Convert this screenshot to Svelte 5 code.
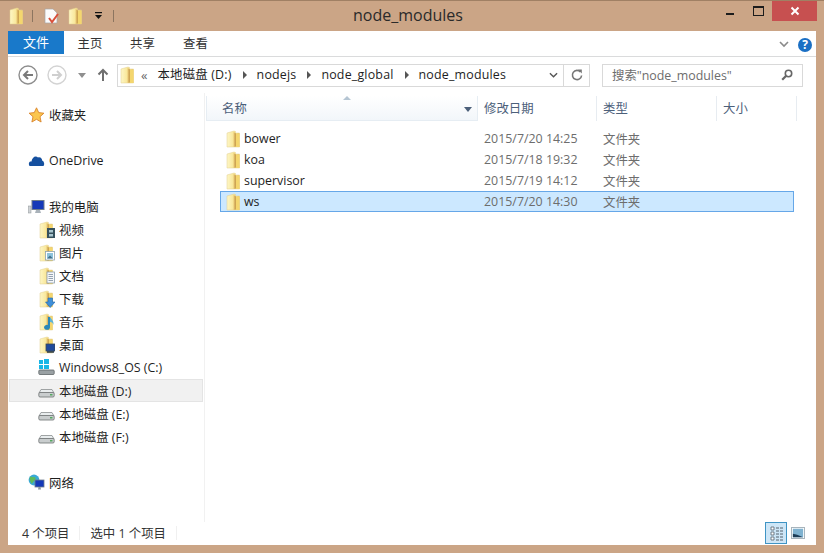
<script>
  const files = [
    { name: 'bower', date: '2015/7/20 14:25' },
    { name: 'koa', date: '2015/7/18 19:32' },
    { name: 'supervisor', date: '2015/7/19 14:12' },
    { name: 'ws', date: '2015/7/20 14:30', selected: true }
  ];
  const libs = [
    { name: '视频', o: 'video' },
    { name: '图片', o: 'pic' },
    { name: '文档', o: 'doc' },
    { name: '下载', o: 'down' },
    { name: '音乐', o: 'music' },
    { name: '桌面', o: 'desk' }
  ];
  const crumbs = ['本地磁盘 (D:)', 'nodejs', 'node_global', 'node_modules'];
  const disks = [
    { name: '本地磁盘 (D:)', selected: true },
    { name: '本地磁盘 (E:)' },
    { name: '本地磁盘 (F:)' }
  ];
</script>

{#snippet folder(overlay = '')}
  <svg class="ic16" viewBox="0 0 17 18" width="17" height="18">
    <defs>
      <linearGradient id="fg" x1="0" x2="1" y1="0" y2="0">
        <stop offset="0" stop-color="#fdf6c6" />
        <stop offset="0.6" stop-color="#f8e48f" />
        <stop offset="1" stop-color="#eecb62" />
      </linearGradient>
      <linearGradient id="fs" x1="0" x2="1" y1="0" y2="0">
        <stop offset="0" stop-color="#e9c878" />
        <stop offset="1" stop-color="#c79c4a" />
      </linearGradient>
    </defs>
    <path d="M2 3 L9 1 L10.5 1.5 L10.5 3 L14.5 3 L14.5 17 L2 17 Z" fill="url(#fg)" stroke="#e3cf8e" stroke-width="0.5" />
    <path d="M8.5 2 L11 3.5 L11 16.5 L8.5 17 Z" fill="url(#fs)" />
    <path d="M11 4 L14.5 4 L14.5 17 L11 17 Z" fill="#f4d66e" />
    {#if overlay === 'video'}
      <rect x="9" y="7" width="8" height="10" fill="#35505c" />
      <rect x="11" y="9" width="4" height="2.5" fill="#a9c6cf" />
      <rect x="11" y="13" width="4" height="2.5" fill="#a9c6cf" />
    {:else if overlay === 'pic'}
      <rect x="7.5" y="7.5" width="9" height="8.5" fill="#fff" stroke="#8da3ad" stroke-width="0.8" />
      <rect x="9" y="9" width="6" height="5.5" fill="#8cc3dc" />
      <path d="M9 14.5 L12 11.5 L15 14.5 Z" fill="#42708a" />
    {:else if overlay === 'doc'}
      <rect x="9" y="5" width="7.5" height="11" fill="#f5f7fa" stroke="#8b9cab" stroke-width="0.8" />
      <path d="M10.5 7.5h4.5M10.5 9.5h4.5M10.5 11.5h4.5M10.5 13.5h4.5" stroke="#7c8da0" stroke-width="0.8" />
    {:else if overlay === 'down'}
      <path d="M10 8 H14.5 V12 H17 L12.2 17.5 L7.5 12 H10 Z" fill="#3f8fd8" stroke="#1f66ad" stroke-width="0.6" />
    {:else if overlay === 'music'}
      <path d="M12 4 L12 14 A3 2.5 0 1 1 10 12 L10 4 Z" fill="#2b88b8" />
      <path d="M12 4 C14 7 16 8 15.5 12 C15 10 14 9 12 9 Z" fill="#5fb4d8" />
    {:else if overlay === 'desk'}
      <rect x="8" y="8" width="9" height="7" fill="#1f4a9c" stroke="#3b4a55" stroke-width="0.8" />
      <rect x="9" y="15" width="7" height="1.8" fill="#3b4a55" />
    {/if}
  </svg>
{/snippet}

{#snippet disk()}
  <svg class="ic16" viewBox="0 0 17 18" width="17" height="18">
    <path d="M3 7.5 H14 L16 11 H1 Z" fill="#e9edee" stroke="#8a8f90" stroke-width="0.8" />
    <rect x="0.8" y="10.5" width="15.4" height="4.5" rx="1.2" fill="#c9cdce" stroke="#6d7172" stroke-width="0.8" />
    <rect x="12" y="12" width="2.5" height="1.5" fill="#55a860" />
  </svg>
{/snippet}

<div class="window">
  <header class="titlebar">
    <div class="qat">
      {@render folder()}
      <i class="qsep"></i>
      <svg viewBox="0 0 16 16" width="16" height="16" class="qdoc">
        <path d="M2 1 H10 L14 5 V15 H2 Z" fill="#fbfbfb" stroke="#a8a8a8" stroke-width="0.7" />
        <path d="M6 10 L9 14 L15 6" fill="none" stroke="#d9503a" stroke-width="2" />
      </svg>
      {@render folder()}
      <svg viewBox="0 0 9 9" width="9" height="9" class="qdrop">
        <rect x="1" y="1" width="7" height="1.2" fill="#111" />
        <path d="M1 4 H8 L4.5 8 Z" fill="#111" />
      </svg>
      <i class="qsep last"></i>
    </div>
    <div class="title">node_modules</div>
    <div class="winbtns">
      <span class="wb"><i class="min"></i></span>
      <span class="wb"><i class="max"></i></span>
      <span class="wb close">
        <svg viewBox="0 0 10 10" width="10" height="10"><path d="M1.5 1.5 L8.5 8.5 M8.5 1.5 L1.5 8.5" stroke="#fff" stroke-width="2" /></svg>
      </span>
    </div>
  </header>

  <div class="content">
    <nav class="tabs">
      <span class="tab file">文件</span>
      <span class="tab">主页</span>
      <span class="tab">共享</span>
      <span class="tab">查看</span>
      <span class="tabs-right">
        <svg viewBox="0 0 10 7" width="10" height="7"><path d="M1 1 L5 5 L9 1" fill="none" stroke="#8a8a8a" stroke-width="1.6" /></svg>
        <span class="help">?</span>
      </span>
    </nav>

    <div class="navbar">
      <svg class="back" viewBox="0 0 20 20" width="20" height="20">
        <circle cx="10" cy="10" r="9" fill="#fff" stroke="#8e8e8e" stroke-width="1.4" />
        <path d="M15 10 H6 M10 6 L6 10 L10 14" fill="none" stroke="#7a7a7a" stroke-width="2" />
      </svg>
      <svg class="fwd" viewBox="0 0 20 20" width="20" height="20">
        <circle cx="10" cy="10" r="9" fill="#fff" stroke="#d3d3d3" stroke-width="1.4" />
        <path d="M5 10 H14 M10 6 L14 10 L10 14" fill="none" stroke="#cfcfcf" stroke-width="2" />
      </svg>
      <svg class="hist" viewBox="0 0 8 5" width="8" height="5"><path d="M0 0 H8 L4 5 Z" fill="#8f8f8f" /></svg>
      <svg class="up" viewBox="0 0 12 14" width="12" height="14">
        <path d="M6 13 V2 M1.5 6.5 L6 2 L10.5 6.5" fill="none" stroke="#6f6f6f" stroke-width="2" />
      </svg>
      <div class="address">
        {@render folder()}
        <span class="chev">«</span>
        {#each crumbs as c, i}
          <span class="crumb">{c}</span>
          {#if i < crumbs.length - 1}<i class="tri"></i>{/if}
        {/each}
        <span class="addr-end">
          <svg viewBox="0 0 10 7" width="9" height="7"><path d="M1 1 L5 5 L9 1" fill="none" stroke="#555" stroke-width="1.5" /></svg>
        </span>
        <span class="refresh">
          <svg viewBox="0 0 12 12" width="12" height="12"><path d="M9.5 3 A4.6 4.6 0 1 0 10.6 6.5" fill="none" stroke="#777" stroke-width="1.6" /><path d="M7 0.5 L10.8 0.5 L10.8 4.5 Z" fill="#777" /></svg>
        </span>
      </div>
      <div class="search">
        <span>搜索"node_modules"</span>
        <svg viewBox="0 0 12 12" width="12" height="12"><circle cx="7.5" cy="4.5" r="3.2" fill="none" stroke="#666" stroke-width="1.6" /><path d="M5 7 L1.2 10.8" stroke="#666" stroke-width="2.2" /></svg>
      </div>
    </div>

    <div class="main">
      <aside class="sidebar">
        <div class="group">
          <div class="item">
            <svg class="ic16" viewBox="0 0 16 16" width="16" height="16"><path d="M8 0.8 L10.2 5.6 L15.4 6.2 L11.5 9.7 L12.6 15 L8 12.3 L3.4 15 L4.5 9.7 L0.6 6.2 L5.8 5.6 Z" fill="#fbc64e" stroke="#d9832a" stroke-width="0.9" /></svg>
            收藏夹
          </div>
        </div>
        <div class="group">
          <div class="item">
            <svg class="ic16" viewBox="0 0 16 16" width="16" height="16"><path d="M1 13 C-0.5 10 1 8 3 8.5 C3.5 4.5 7 2 9.5 4.5 C12 3.5 14 6 13.5 7.5 C15.5 8 16.5 11.5 15 13 Z" fill="#15509f" /></svg>
            OneDrive
          </div>
        </div>
        <div class="group">
          <div class="item">
            <svg class="ic16" viewBox="0 0 17 16" width="17" height="16">
              <rect x="0.5" y="7" width="2.5" height="7" fill="#cfd3d6" stroke="#8c9296" stroke-width="0.5" />
              <rect x="4" y="1.5" width="12" height="9" fill="#1539b8" stroke="#6f7d8a" stroke-width="1" />
              <path d="M7 14 H13 L12 11 H8 Z" fill="#a9b2ba" />
            </svg>
            我的电脑
          </div>
          {#each libs as l}
            <div class="item sub">{@render folder(l.o)}{l.name}</div>
          {/each}
          <div class="item sub">
            <svg class="ic16" viewBox="0 0 17 18" width="17" height="18">
              <g fill="#19b6e6"><rect x="1" y="1" width="4" height="4"/><rect x="6" y="0" width="5" height="5"/><rect x="1" y="6" width="4" height="4"/><rect x="6" y="6" width="5" height="4"/></g>
              <rect x="0.8" y="11" width="15.4" height="4.5" rx="1" fill="#9aa1a4" stroke="#5e6467" stroke-width="0.8" />
            </svg>
            Windows8_OS (C:)
          </div>
          {#each disks as d}
            <div class="item sub" class:sel={d.selected}>{@render disk()}{d.name}</div>
          {/each}
        </div>
        <div class="group">
          <div class="item">
            <svg class="ic16" viewBox="0 0 17 17" width="17" height="17">
              <circle cx="6" cy="6" r="5.4" fill="#39a9d6" />
              <path d="M2 3 C4 2 5 4 7 3 C9 6 5 7 4 10 C2 8 1 5 2 3 Z" fill="#5dbb5a" />
              <rect x="7" y="6" width="9" height="7" fill="#1539b8" stroke="#6f7d8a" stroke-width="0.8" />
              <path d="M10 15.5 H13 L12.5 13 H10.5 Z" fill="#8d97a0" />
            </svg>
            网络
          </div>
        </div>
      </aside>

      <section class="pane">
        <div class="cols">
          <div class="col name hover">
            名称
            <svg class="sort" viewBox="0 0 8 4" width="8" height="4"><path d="M0 4 L4 0 L8 4 Z" fill="#b5c5d3" /></svg>
            <svg class="cdrop" viewBox="0 0 8 5" width="8" height="5"><path d="M0 0 H8 L4 5 Z" fill="#4c607a" /></svg>
          </div>
          <div class="col date">修改日期</div>
          <div class="col type">类型</div>
          <div class="col size">大小</div>
        </div>
        <div class="rows">
          {#each files as f}
            <div class="row" class:selected={f.selected}>
              <span class="fname">{@render folder()}<b>{f.name}</b></span>
              <span class="fdate">{f.date}</span>
              <span class="ftype">文件夹</span>
            </div>
          {/each}
        </div>
      </section>
    </div>

    <footer class="status">
      <span>4 个项目</span>
      <i class="ssep"></i>
      <span>选中 1 个项目</span>
      <i class="ssep"></i>
      <span class="views">
        <span class="view on">
          <svg viewBox="0 0 20 20" width="20" height="20">
            <path d="M5 4h3v3h-3zM5 9h3v3h-3zM5 14h3v3h-3z" fill="#fff" stroke="#56636e" stroke-width="0.8" />
            <path d="M10 5h8M10 8h8M10 11h8M10 14h8M10 17h8" stroke="#56636e" stroke-width="1" stroke-dasharray="3 1" />
          </svg>
        </span>
        <span class="view">
          <svg viewBox="0 0 16 14" width="14" height="12">
            <rect x="0.5" y="0.5" width="15" height="13" fill="#fff" stroke="#9aa8b2" />
            <rect x="2" y="2" width="12" height="10" fill="#7fb2d0" />
            <path d="M2 12 V8 L7 9 L14 12 Z" fill="#1d3d57" />
          </svg>
        </span>
      </span>
    </footer>
  </div>
</div>

<style>
  :global(body) {
    margin: 0;
    background: #cba586;
  }
  .window {
    width: 824px;
    height: 553px;
    box-sizing: border-box;
    padding: 0 8px 8px;
    background: #cba586;
    border-top: 1px solid #a08064;
    display: flex;
    flex-direction: column;
    font-family: "Open Sans", "Noto Sans CJK SC", sans-serif;
    font-size: 12.4px;
    color: #1e1e1e;
    overflow: hidden;
  }
  svg { display: block; flex: none; }
  i { display: block; }

  .titlebar {
    height: 30px;
    flex: none;
    display: flex;
    position: relative;
    align-items: flex-start;
  }
  .qat {
    display: flex;
    align-items: center;
    height: 30px;
    padding-bottom: 1px;
    box-sizing: border-box;
  }
  .qsep { width: 1px; height: 12px; background: #8c7560; margin: 0 10px 0 7px; }
  .qsep.last { margin: 0 0 0 10px; }
  .qdoc { margin-right: 8px; }
  .qdrop { margin-left: 10px; }
  .title {
    position: absolute;
    left: 0;
    right: 8px;
    top: 4px;
    text-align: center;
    font-size: 16px;
    line-height: 20px;
    color: #2a2a2a;
  }
  .winbtns { margin-left: auto; display: flex; margin-right: -1px; }
  .wb { width: 28px; height: 20px; display: flex; align-items: center; justify-content: center; }
  .close { width: 45px; background: #c75050; }
  .min { width: 8px; height: 2px; background: #1c1c1c; margin-top: 6px; }
  .max { width: 9px; height: 7px; border: 1px solid #1c1c1c; border-top-width: 2px; }

  .content {
    flex: 1;
    min-height: 0;
    background: #fff;
    display: flex;
    flex-direction: column;
  }
  .tabs {
    height: 26px;
    flex: none;
    box-sizing: border-box;
    border-bottom: 1px solid #dadbdc;
    display: flex;
    align-items: flex-start;
    color: #333;
  }
  .tab { width: 53px; height: 25px; line-height: 26px; text-align: center; }
  .tab.file {
    width: 56px;
    height: 23px;
    line-height: 23px;
    background: #1979ca;
    color: #fff;
    font-size: 13px;
  }
  .tab:nth-child(2) { width: 52px; }
  .tabs-right { margin-left: auto; display: flex; align-items: center; gap: 9px; height: 25px; padding: 2px 4px 0 0; box-sizing: border-box; }
  .help {
    width: 14px;
    height: 14px;
    border-radius: 50%;
    background: #1a6fc4;
    color: #fff;
    font: bold 12px/14px "Open Sans", sans-serif;
    text-align: center;
  }

  .navbar {
    height: 36px;
    flex: none;
    display: flex;
    align-items: center;
    padding: 0 13px 0 10px;
    box-sizing: border-box;
  }
  .fwd { margin-left: 9px; }
  .hist { margin-left: 11px; }
  .up { margin-left: 11px; margin-right: 8px; }
  .address {
    width: 473px;
    height: 23px;
    box-sizing: border-box;
    border: 1px solid #d9d9d9;
    display: flex;
    align-items: center;
    padding-left: 1px;
    color: #1e1e1e;
  }
  .chev { margin: 0 10px 0 5px; color: #666; font-size: 13px; }
  .tri { width: 0; height: 0; border-left: 4px solid #555; border-top: 4px solid transparent; border-bottom: 4px solid transparent; margin: 0 10px 0 11px; }
  .crumb { white-space: nowrap; letter-spacing: 0.2px; margin-top: -2px; }
  .addr-end { margin-left: auto; width: 20px; height: 21px; display: flex; align-items: center; justify-content: center; }
  .refresh { width: 25px; height: 21px; border-left: 1px solid #d9d9d9; display: flex; align-items: center; justify-content: center; }
  .search {
    width: 201px;
    height: 23px;
    margin-left: auto;
    box-sizing: border-box;
    border: 1px solid #d9d9d9;
    display: flex;
    align-items: center;
    justify-content: space-between;
    padding: 0 9px;
    color: #6d6d6d;
  }

  .main { flex: 1; min-height: 0; display: flex; }
  .sidebar {
    width: 197px;
    flex: none;
    box-sizing: border-box;
    padding-top: 10px;
    padding-left: 1px;
    border-right: 1px solid #f1f1f1;
    display: flex;
    flex-direction: column;
    gap: 23px;
    margin-right: 1px;
  }
  .item {
    height: 23px;
    display: flex;
    align-items: center;
    gap: 4px;
    padding-left: 19px;
    width: 194px;
    box-sizing: border-box;
    white-space: nowrap;
  }
  .item.sub { padding-left: 29px; }
  .item.sel { background: #f1f1f1; border: 1px solid #e4e4e4; padding-left: 28px; }
  .ic16 { width: 17px; }

  .pane { flex: 1; min-width: 0; display: flex; flex-direction: column; }
  .cols {
    display: flex;
    height: 25px;
    margin-top: 3px;
    flex: none;
    color: #4c607a;
  }
  .col { box-sizing: border-box; height: 100%; line-height: 25px; position: relative; border-right: 1px solid #e7ecf1; }
  .col.name { width: 272px; padding-left: 15px; background: linear-gradient(#fff, #f2f6fa); border: 1px solid #e6edf3; border-top: 0; }
  .sort { position: absolute; left: 136px; top: 0; }
  .cdrop { position: absolute; right: 5px; top: 11px; }
  .col.date { width: 119px; padding-left: 6px; }
  .col.type { width: 120px; padding-left: 6px; }
  .col.size { width: 80px; padding-left: 6px; }

  .rows { padding: 7px 0 0 14px; }
  .row {
    width: 574px;
    height: 21px;
    box-sizing: border-box;
    display: flex;
    align-items: center;
    color: #6d6d6d;
    border: 1px solid transparent;
  }
  .row.selected { background: #cce8ff; border-color: #66a7e8; }
  .fname { width: 263px; display: flex; align-items: center; gap: 2px; padding-left: 4px; box-sizing: border-box; color: #1e1e1e; }
  .fname b { font-weight: 400; }
  .fdate { width: 119px; }

  .status {
    height: 23px;
    flex: none;
    display: flex;
    align-items: center;
    padding-left: 14px;
    padding-bottom: 2px;
    box-sizing: border-box;
    color: #333;
  }
  .ssep { width: 1px; height: 14px; background: #f0f0f0; margin: 0 10px; }
  .views { margin-left: auto; display: flex; align-items: center; margin-right: 7px; height: 23px; }
  .view { width: 22px; height: 22px; display: flex; align-items: center; justify-content: center; box-sizing: border-box; }
  .view.on { background: #cde6f7; border: 1px solid #3f94c4; }
</style>
